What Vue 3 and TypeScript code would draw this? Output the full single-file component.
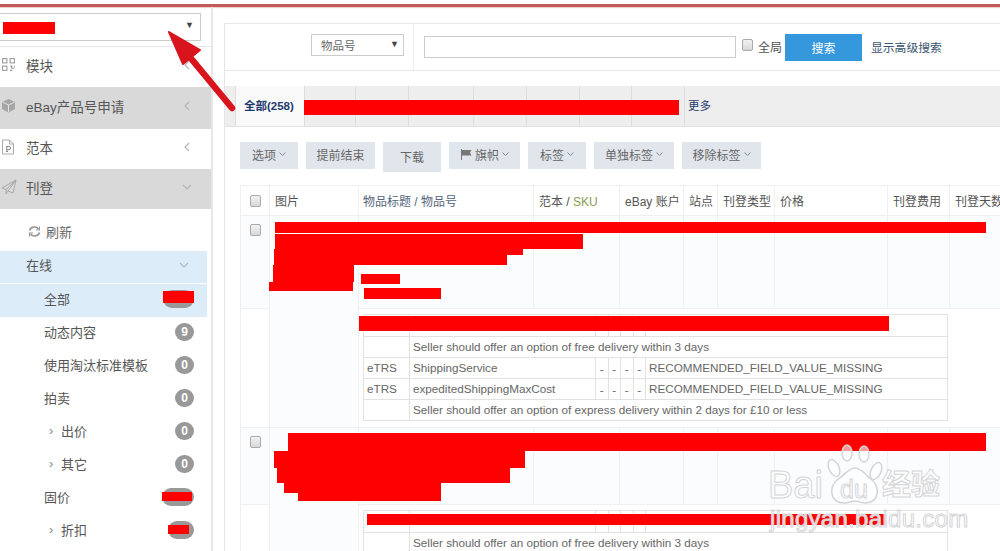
<template>
  <div class="page">
    <div class="top-line"></div>
    <div class="body">
      <aside class="sidebar">
        <div class="select-wrap">
          <div class="shop-select"><span class="caret">▼</span></div>
        </div>
        <nav class="menu">
          <div
            v-for="m in mainMenu"
            :key="m.label"
            :class="['menu-row', { shaded: m.shaded }]"
            :style="{ height: m.height + 'px' }"
          >
            <span class="menu-icon">
              <svg v-if="m.icon === 'grid'" width="15" height="15" viewBox="0 0 14 14" fill="none" stroke="#999">
                <rect x="1.500" y="1.500" width="4" height="4" />
                <rect x="8.500" y="1.500" width="4" height="4" />
                <rect x="1.500" y="8.500" width="4" height="4" />
                <path d="M8.500 8.500h1.500v2h2.500M8.500 12.500h2M12.500 8.500v1" />
              </svg>
              <svg v-else-if="m.icon === 'cube'" width="15" height="15" viewBox="0 0 15 15">
                <path d="M7.500 1 14 4v7l-6.500 3.500L1 11V4z" fill="#a6a6a6" />
                <path d="M1.500 4.200 7.500 7l6-2.800M7.500 7v7" fill="none" stroke="#e2e2e2" />
              </svg>
              <svg v-else-if="m.icon === 'file'" width="14" height="16" viewBox="0 0 14 16" fill="none" stroke="#aaa">
                <path d="M1.500 1h7l4 4v10h-11zM8.500 1v4h4" />
                <path d="M5 7.500h3a1.500 1.500 0 0 1 0 3.200H5.800M5.800 7.500v5M5 12.500h2" stroke="#888" />
              </svg>
              <svg v-else width="16" height="16" viewBox="0 0 16 16" fill="none" stroke="#aaa" stroke-linejoin="round">
                <path d="M15 1 1 9l4 1.500L15 1 7 12l5 2zM5 10.500V15l2-3" />
              </svg>
            </span>
            <span class="menu-label">{{ m.label }}</span>
            <svg class="menu-chev" width="10" height="10" viewBox="0 0 10 10" fill="none" stroke="#b5b5b5" stroke-width="1.200">
              <path v-if="m.open" d="M1 3l4 4 4-4" />
              <path v-else d="M7 1 3 5l4 4" />
            </svg>
          </div>
        </nav>
        <div class="refresh-row">
          <svg width="13" height="13" viewBox="0 0 13 13" fill="none" stroke="#999" stroke-width="1.700">
            <path d="M1.500 5.500a5 4.500 0 0 1 9-1.500M11.500 7.500a5 4.500 0 0 1-9 1.500" />
            <path d="M11.500 1.500V5H8M1.500 11.500V8H5" stroke-width="1.100" />
          </svg>
          <span>刷新</span>
        </div>
        <div class="online-row">
          <span>在线</span>
          <svg width="10" height="10" viewBox="0 0 10 10" fill="none" stroke="#b0b8c0" stroke-width="1.200">
            <path d="M1 3l4 4 4-4" />
          </svg>
        </div>
        <div
          v-for="s in subMenu"
          :key="s.label"
          :class="['sub-row', { active: s.active, nested: s.nested }]"
        >
          <span v-if="s.nested" class="sub-caret">›</span>
          <span class="sub-label">{{ s.label }}</span>
          <span class="badge" :style="{ width: s.badgeWidth + 'px' }">{{ s.count }}</span>
        </div>
      </aside>

      <main class="main">
        <div class="search-box">
          <div class="search-type">
            <div class="type-select">物品号<span class="caret">▼</span></div>
          </div>
          <div class="search-fields">
            <div class="search-input"></div>
            <input class="check global-check" type="checkbox" />
            <span class="global-label">全局</span>
            <button class="search-btn">搜索</button>
            <a class="advanced">显示高级搜索</a>
          </div>
        </div>

        <div class="tabs">
          <div class="tab current">全部(258)</div>
          <div v-for="w in tabWidths" :key="w" class="tab" :style="{ width: w + 'px' }"></div>
          <div class="tab more">更多</div>
        </div>

        <div class="toolbar">
          <button
            v-for="b in toolButtons"
            :key="b.label"
            :class="['tool-btn', { tall: b.tall }]"
            :style="{ width: b.width + 'px' }"
          >
            <svg v-if="b.flag" width="12" height="11" viewBox="0 0 12 11">
              <path d="M1 0h1v11H1zM2 1h9.500L10 3.500 11.500 6.500H2z" fill="#777" />
            </svg>
            {{ b.label }}
            <svg v-if="b.menu" width="7" height="5" viewBox="0 0 7 5" fill="none" stroke="#888">
              <path d="M.5.500l3 3 3-3" />
            </svg>
          </button>
        </div>

        <table class="listing">
          <colgroup>
            <col v-for="c in columnWidths" :key="c.key" :style="{ width: c.width + 'px' }" />
          </colgroup>
          <thead>
            <tr class="head-row">
              <th class="center"><input class="check" type="checkbox" /></th>
              <th>图片</th>
              <th class="title-head">物品标题 / 物品号</th>
              <th>范本 / <span class="sku">SKU</span></th>
              <th>eBay 账户</th>
              <th>站点</th>
              <th>刊登类型</th>
              <th>价格</th>
              <th>刊登费用</th>
              <th class="nowrap">刊登天数</th>
            </tr>
          </thead>
          <tbody>
            <template v-for="row in rows" :key="row.id">
              <tr class="item-row" :style="{ height: row.itemHeight + 'px' }">
                <td class="check-cell"><input class="check" type="checkbox" /></td>
                <td rowspan="2" class="image-cell"></td>
                <td v-for="n in 8" :key="n"></td>
              </tr>
              <tr class="issue-row">
                <td class="blank-cell"></td>
                <td colspan="8" class="issue-cell">
                  <table class="issues">
                    <colgroup>
                      <col class="c-source" />
                      <col class="c-field" />
                      <col class="c-dash" />
                      <col class="c-dash" />
                      <col class="c-dash" />
                      <col class="c-dash" />
                      <col />
                    </colgroup>
                    <tbody>
                      <tr class="hidden-row">
                        <td></td><td></td><td></td><td></td><td></td><td></td><td></td>
                      </tr>
                      <template v-for="line in row.issues" :key="line.key">
                        <tr v-if="line.note">
                          <td></td>
                          <td colspan="6">{{ line.note }}</td>
                        </tr>
                        <tr v-else>
                          <td>eTRS</td>
                          <td>{{ line.field }}</td>
                          <td class="center">-</td>
                          <td class="center">-</td>
                          <td class="center">-</td>
                          <td class="center">-</td>
                          <td>RECOMMENDED_FIELD_VALUE_MISSING</td>
                        </tr>
                      </template>
                    </tbody>
                  </table>
                </td>
              </tr>
            </template>
          </tbody>
        </table>
      </main>
    </div>

    <!-- blacked-out (red) parts of the original screenshot -->
    <div
      v-for="(r, i) in redactions"
      :key="i"
      class="redact"
      :style="{ left: r[0] + 'px', top: r[1] + 'px', width: r[2] - r[0] + 'px', height: r[3] - r[1] + 'px' }"
    ></div>

    <svg class="arrow" width="90" height="100" viewBox="0 0 90 100">
      <path d="M65 80 22 28" stroke="#d8141c" stroke-width="6.500" stroke-linecap="round" />
      <path d="M2 4 33 22 16 36z" fill="#d8141c" stroke="#d8141c" stroke-width="2" stroke-linejoin="round" />
    </svg>

    <div class="watermark">
      <svg class="paw" width="60" height="64" viewBox="0 0 60 64" fill="rgba(255,255,255,.6)" stroke="#d4d5d8" stroke-width="1.500">
        <ellipse cx="21" cy="10" rx="5" ry="8" />
        <ellipse cx="38" cy="11" rx="5" ry="8" />
        <ellipse cx="8" cy="25" rx="5" ry="9" transform="rotate(-25 8 25)" />
        <ellipse cx="50" cy="28" rx="5" ry="9" transform="rotate(25 50 28)" />
        <path d="M29 25c7 0 10 7 17 12 8 6 8 23-7 23-4 0-6-2-10-2s-6 2-11 2c-15 0-15-17-7-23 8-5 11-12 18-12z" />
      </svg>
      <span class="wm-bai">Bai</span>
      <span class="wm-du">du</span>
      <span class="wm-jy">经验</span>
      <span class="wm-url">jingyan.baidu.com</span>
    </div>
  </div>
</template>

<script setup lang="ts">
interface MenuItem {
  label: string;
  icon: string;
  height: number;
  shaded?: boolean;
  open?: boolean;
}

const mainMenu: MenuItem[] = [
  { label: "模块", icon: "grid", height: 40 },
  { label: "eBay产品号申请", icon: "cube", height: 42, shaded: true },
  { label: "范本", icon: "file", height: 40 },
  { label: "刊登", icon: "plane", height: 40, shaded: true, open: true },
];

const subMenu = [
  { label: "全部", count: "", badgeWidth: 31, active: true },
  { label: "动态内容", count: "9", badgeWidth: 19 },
  { label: "使用淘汰标准模板", count: "0", badgeWidth: 19 },
  { label: "拍卖", count: "0", badgeWidth: 19 },
  { label: "出价", count: "0", badgeWidth: 19, nested: true },
  { label: "其它", count: "0", badgeWidth: 19, nested: true },
  { label: "固价", count: "", badgeWidth: 32 },
  { label: "折扣", count: "", badgeWidth: 26, nested: true },
];

const tabWidths = [51, 53, 65, 53, 53, 52, 53];

const toolButtons = [
  { label: "选项", width: 58, menu: true },
  { label: "提前结束", width: 69 },
  { label: "下载", width: 58, tall: true },
  { label: "旗帜", width: 71, menu: true, flag: true },
  { label: "标签", width: 58, menu: true },
  { label: "单独标签", width: 80, menu: true },
  { label: "移除标签", width: 79, menu: true },
];

const columnWidths = [
  { key: "check", width: 29 },
  { key: "image", width: 89 },
  { key: "title", width: 175 },
  { key: "sku", width: 86 },
  { key: "account", width: 64 },
  { key: "site", width: 34 },
  { key: "type", width: 57 },
  { key: "price", width: 113 },
  { key: "fee", width: 62 },
  { key: "days", width: 70 },
];

const freeDelivery = "Seller should offer an option of free delivery within 3 days";
const expressDelivery = "Seller should offer an option of express delivery within 2 days for £10 or less";

const rows = [
  {
    id: 1,
    itemHeight: 93,
    issues: [
      { key: "a", note: freeDelivery },
      { key: "b", field: "ShippingService" },
      { key: "c", field: "expeditedShippingMaxCost" },
      { key: "d", note: expressDelivery },
    ],
  },
  {
    id: 2,
    itemHeight: 77,
    issues: [{ key: "a", note: freeDelivery }],
  },
];

// left, top, right, bottom
const redactions: number[][] = [
  [3, 22, 55, 34],
  [163, 291, 194, 303],
  [162, 492, 192, 501],
  [168, 525, 189, 534],
  [304, 100, 679, 115],
  [275, 222, 986, 233],
  [275, 234, 583, 249],
  [274, 249, 523, 255],
  [274, 255, 507, 265],
  [273, 265, 354, 282],
  [269, 282, 353, 291],
  [361, 274, 400, 284],
  [364, 288, 441, 299],
  [359, 316, 889, 331],
  [288, 433, 986, 451],
  [274, 451, 525, 468],
  [277, 468, 510, 483],
  [284, 483, 441, 493],
  [298, 493, 441, 501],
  [367, 514, 886, 525],
];
</script>

<style>
body {
  overflow: hidden;
}
</style>

<style scoped>
.page {
  position: relative;
  width: 1000px;
  height: 551px;
  overflow: hidden;
  background: #fff;
  color: #555;
  font-family: "Liberation Sans", "Noto Sans CJK SC", sans-serif;
  font-size: 12px;
}

.top-line {
  height: 3px;
  margin-top: 4px;
  background: #c25a5a;
  box-shadow: 0 1px 1px #eec9c9;
}

.body {
  display: flex;
  height: 544px;
}

.sidebar {
  flex: none;
  width: 211px;
  height: 544px;
  border-right: 2px solid #e8e8e8;
}

.select-wrap {
  height: 40px;
  padding-top: 6px;
  box-sizing: border-box;
  border-bottom: 1px solid #e8e8e8;
}

.shop-select {
  position: relative;
  width: 201px;
  height: 28px;
  box-sizing: border-box;
  border: 1px solid #ccc;
  border-left: none;
  background: #fff;
}

.caret {
  position: absolute;
  right: 6px;
  top: 6px;
  font-size: 9px;
  color: #444;
}

.menu-row {
  display: flex;
  align-items: center;
  padding: 0 0 5px 1px;
  box-sizing: border-box;
  font-size: 13.500px;
  color: #555;
}

.menu-row.shaded {
  background: #d9d9d9;
}

.menu-icon {
  display: flex;
  align-items: center;
  width: 25px;
}

.menu-label {
  flex: 1;
}

.menu-chev {
  margin-right: 19px;
}

.refresh-row {
  display: flex;
  align-items: center;
  gap: 5px;
  height: 42px;
  box-sizing: border-box;
  padding: 3px 0 0 28px;
  font-size: 13px;
  color: #666;
}

.online-row {
  display: flex;
  align-items: center;
  justify-content: space-between;
  width: 207px;
  height: 32px;
  box-sizing: border-box;
  padding: 0 18px 5px 26px;
  margin-bottom: 1px;
  background: #dcedf9;
  font-size: 13px;
}

.sub-row {
  display: flex;
  align-items: center;
  width: 207px;
  height: 33px;
  box-sizing: border-box;
  padding: 0 13px 4px 44px;
  font-size: 13px;
  color: #555;
}

.sub-row.active {
  background: #dcedf9;
}

.sub-row.nested {
  padding-left: 49px;
}

.sub-caret {
  width: 12px;
  font-size: 13px;
  color: #888;
}

.sub-label {
  flex: 1;
}

.badge {
  height: 18px;
  border-radius: 9px;
  background: #999;
  color: #fff;
  font-size: 12px;
  font-weight: bold;
  line-height: 18px;
  text-align: center;
}

.main {
  flex: none;
  width: 776px;
  margin: 16px 0 0 11px;
  border-left: 1px solid #e5e5e5;
}

.search-box {
  display: flex;
  height: 48px;
  width: 800px;
  box-sizing: border-box;
  border-top: 1px solid #e8e8e8;
  border-bottom: 1px solid #e8e8e8;
}

.search-type {
  width: 189px;
  box-sizing: border-box;
  border-right: 1px solid #eee;
  padding: 10px 0 0 86px;
}

.type-select {
  position: relative;
  width: 93px;
  height: 22px;
  box-sizing: border-box;
  border: 1px solid #ccc;
  padding-left: 9px;
  line-height: 23px;
  font-size: 11.500px;
  color: #666;
}

.type-select .caret {
  right: 4px;
  top: 0;
  line-height: 19px;
}

.search-fields {
  display: flex;
  align-items: flex-start;
  padding: 10px 0 0 10px;
}

.search-input {
  width: 312px;
  height: 22px;
  margin-top: 2px;
  box-sizing: border-box;
  border: 1px solid #ccc;
}

.global-label {
  margin-top: 4px;
  color: #555;
}

.search-btn {
  width: 77px;
  height: 27px;
  margin-left: 3px;
  padding-bottom: 1px;
  border: none;
  background: #3598dc;
  color: #fff;
  font: inherit;
  font-size: 12px;
}

.advanced {
  margin: 4px 0 0 9px;
  font-size: 11.800px;
  color: #3a5570;
}

.check {
  appearance: none;
  flex: none;
  display: block;
  width: 11px;
  height: 12px;
  margin: 0 0 0 9px;
  border: 1px solid #aaa;
  border-radius: 2px;
  background: linear-gradient(#f2f2f2, #d8d8d8);
}

.check.global-check {
  margin: 5px 5px 0 6px;
}

.tabs {
  display: flex;
  height: 41px;
  width: 800px;
  margin-top: 15px;
  padding-left: 10px;
  background: #eee;
  border-bottom: 1px solid #e3e3e3;
  box-sizing: border-box;
}

.tab {
  box-sizing: border-box;
  border-left: 1px solid #ddd;
}

.tab.current {
  width: 69px;
  padding-left: 8px;
  background: #f9f9f9;
  color: #1f3a6e;
  font-weight: bold;
  line-height: 40px;
  font-size: 11.500px;
}

.tab.more {
  padding-left: 3px;
  color: #1f3a6e;
  line-height: 40px;
  font-size: 11.500px;
}

.toolbar {
  display: flex;
  align-items: flex-start;
  gap: 8px;
  margin: 15px 0 0 15px;
}

.tool-btn {
  display: flex;
  align-items: center;
  justify-content: center;
  gap: 3px;
  height: 27px;
  padding: 0 0 2px;
  border: none;
  background: #e1e5ec;
  color: #666;
  font: inherit;
}

.tool-btn.tall {
  height: 30px;
}

.listing {
  table-layout: fixed;
  width: 779px;
  margin: 13px 0 0 15px;
  border-collapse: collapse;
  font-size: 12px;
}

.listing th,
.listing td {
  border: 1px solid #eff0f2;
  padding: 0;
}

.head-row {
  height: 30px;
}

.listing th {
  padding-left: 5px;
  font-weight: normal;
  text-align: left;
  color: #555;
  white-space: nowrap;
  overflow: hidden;
}

.listing th.center {
  padding-left: 0;
}

.listing th.title-head {
  padding-left: 4px;
  color: #55657c;
}

.sku {
  color: #8a9a50;
}

.item-row td {
  background: #fbfcfe;
  vertical-align: top;
}

.check-cell .check {
  margin-top: 8px;
}

.image-cell {
  background: #fbfcfe;
}

.blank-cell {
  background: #fff;
}

.listing td.issue-cell {
  padding: 5px 2px 6px 4px;
  background: #fff;
}

.issues {
  table-layout: fixed;
  width: 585px;
  border-collapse: collapse;
  color: #666;
  font-size: 11.700px;
  line-height: 13px;
}

.c-source {
  width: 46px;
}

.c-field {
  width: 186px;
}

.c-dash {
  width: 12.500px;
}

.listing .issues td {
  height: 21px;
  box-sizing: border-box;
  padding: 0 3px 1px;
  border: 1px solid #e2e2e2;
  background: #fff;
  white-space: nowrap;
  overflow: hidden;
}

.listing .issues td.center {
  padding: 0;
  text-align: center;
}

.listing .issues .hidden-row td {
  height: 22px;
}

.redact {
  position: absolute;
  background: #fe0000;
}

.arrow {
  position: absolute;
  left: 167px;
  top: 28px;
}

.watermark {
  position: absolute;
  left: 760px;
  top: 435px;
  width: 200px;
  height: 116px;
  pointer-events: none;
}

.paw {
  position: absolute;
  left: 66px;
  top: 8px;
}

.wm-bai,
.wm-du,
.wm-jy,
.wm-url {
  position: absolute;
  color: rgba(255, 255, 255, 0.75);
  -webkit-text-stroke: 1px #d4d5d8;
  font-family: "Liberation Sans", "Noto Sans CJK SC", sans-serif;
  line-height: 1;
}

.wm-bai {
  left: 8px;
  top: 31px;
  font-size: 38px;
}

.wm-du {
  left: 80px;
  top: 42px;
  font-size: 25px;
}

.wm-jy {
  left: 122px;
  top: 36px;
  font-size: 29px;
  font-weight: bold;
}

.wm-url {
  left: 10px;
  top: 72px;
  font-size: 24px;
  color: rgba(255, 255, 255, 0.85);
  letter-spacing: 0.3px;
}
</style>
